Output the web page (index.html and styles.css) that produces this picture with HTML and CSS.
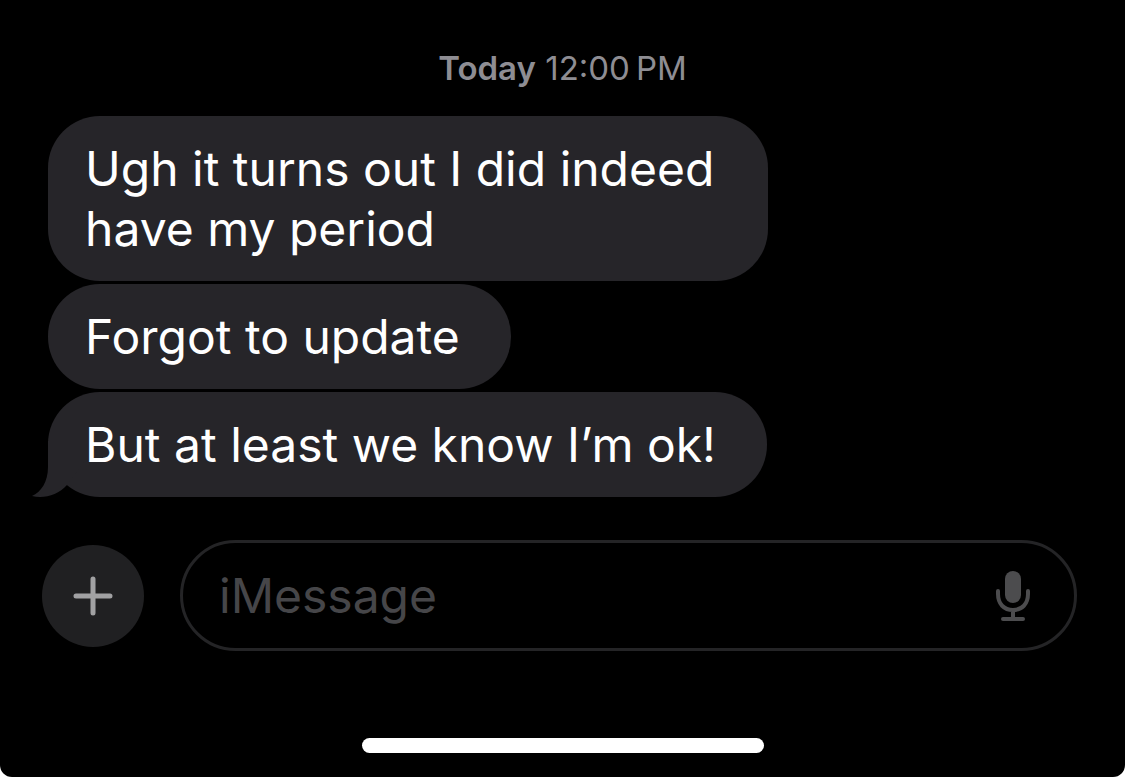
FILE: index.html
```html
<!DOCTYPE html>
<html lang="en">
<head>
    <meta charset="UTF-8">
    <meta name="viewport" content="width=device-width, initial-scale=1.0">
    <title>Messages</title>
    <link rel="stylesheet" href="styles.css">
</head>
<body>
    <div class="screen">
        <main class="conversation">
            <p class="timestamp"><strong>Today</strong> <time>12:00&#8239;PM</time></p>
            <div class="bubble">Ugh it turns out I did indeed have my period</div>
            <div class="bubble">Forgot to update</div>
            <div class="bubble last">
                But at least we know I’m ok!
                <svg class="tail" width="60" height="56" viewBox="0 0 60 56" aria-hidden="true">
                    <path d="M16 0 V26 C16 41 9 51 0 55 C12 58 26 54 35 44 L60 10 V0 Z"/>
                </svg>
            </div>
        </main>
        <form class="composer">
            <button type="button" class="add-btn" aria-label="Add attachment">
                <svg width="40" height="40" viewBox="0 0 40 40">
                    <path d="M20 3 V37 M3 20 H37"/>
                </svg>
            </button>
            <div class="field">
                <input type="text" placeholder="iMessage" aria-label="iMessage">
                <button type="button" class="mic-btn" aria-label="Dictate">
                    <svg width="36" height="50" viewBox="0 0 36 50">
                        <rect x="10" y="0" width="16" height="32" rx="8"/>
                        <path d="M3 20 V23 C3 33 9 39 18 39 C27 39 33 33 33 23 V20 M18 39 V48 M8 48 H28"/>
                    </svg>
                </button>
            </div>
        </form>
        <div class="home-bar"></div>
    </div>
</body>
</html>
```

FILE: styles.css
```css
* {
    box-sizing: border-box;
}
body {
    margin: 0;
    background-color: #fff;
    font-family: Inter, 'Helvetica Neue', Arial, sans-serif;
}
.screen {
    display: flex;
    flex-direction: column;
    min-height: 100vh;
    padding: 48px 0 24px;
    background-color: #000;
    border-radius: 0 0 12px 12px;
}
.conversation {
    display: flex;
    flex-direction: column;
    align-items: flex-start;
    gap: 3px;
    padding: 0 48px;
}
.timestamp {
    align-self: center;
    margin: 0 0 25px;
    color: #8e8d93;
    font-size: 33px;
    line-height: 40px;
}
.timestamp strong {
    font-weight: 600;
}
.bubble {
    position: relative;
    max-width: 70%;
    padding: 23px 51px 22px 37px;
    border-radius: 52px;
    background-color: #262529;
    color: #fff;
    font-size: 48px;
    line-height: 60px;
}
.tail {
    position: absolute;
    left: -16px;
    bottom: 0;
    z-index: -1;
    fill: #262529;
}
.last {
    z-index: 0;
}
.composer {
    display: flex;
    align-items: center;
    gap: 36px;
    margin-top: 43px;
    padding: 0 48px 0 42px;
}
button {
    padding: 0;
    border: none;
    background: none;
    cursor: pointer;
}
button svg {
    display: block;
    fill: none;
    stroke-linecap: round;
}
.add-btn {
    display: flex;
    align-items: center;
    justify-content: center;
    flex: none;
    width: 102px;
    height: 102px;
    border-radius: 50%;
    background-color: #202022;
}
.add-btn svg {
    stroke: #a1a1a3;
    stroke-width: 5;
}
.field {
    display: flex;
    align-items: center;
    flex: 1;
    min-width: 0;
    height: 111px;
    padding: 0 43px 0 36px;
    border: 3px solid #242426;
    border-radius: 56px;
}
.field input {
    flex: 1;
    min-width: 0;
    padding: 0;
    border: none;
    outline: none;
    background: none;
    color: #fff;
    font-family: inherit;
    font-size: 48px;
    line-height: 60px;
}
.field input::placeholder {
    color: #464649;
    opacity: 1;
}
.mic-btn svg {
    stroke: #4c4c4e;
    stroke-width: 4;
}
.mic-btn rect {
    fill: #4c4c4e;
    stroke: none;
}
.home-bar {
    width: 402px;
    max-width: 50%;
    height: 15px;
    margin: auto auto 0;
    border-radius: 8px;
    background-color: #fff;
}
```
